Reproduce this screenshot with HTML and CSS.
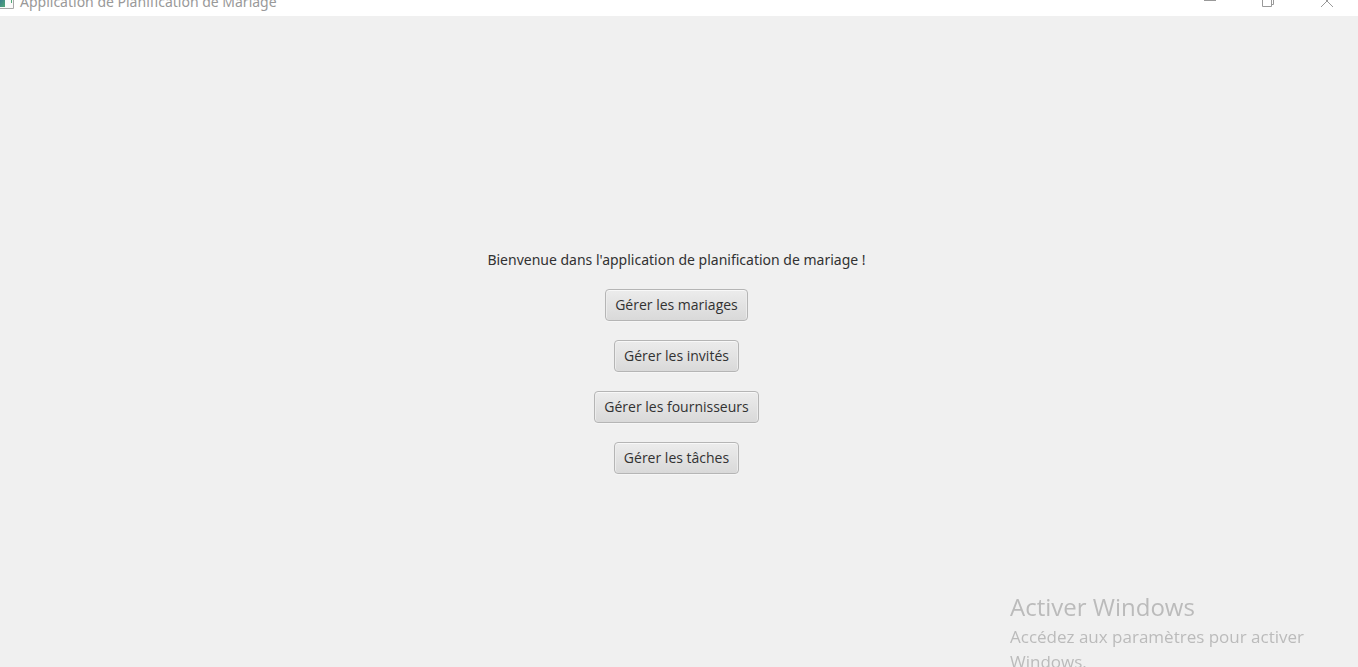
FILE: index.html
```html
<!DOCTYPE html>
<html lang="fr">
<head>
<meta charset="utf-8">
<title>Application de Planification de Mariage</title>
<link rel="stylesheet" href="styles.css">
</head>
<body>
<header class="titlebar">
  <div class="titlebar-name">
    <svg class="app-icon" width="14" height="16" viewBox="0 0 14 16" aria-hidden="true">
      <defs><linearGradient id="g" x1="0" y1="0" x2="1" y2="1"><stop offset="0" stop-color="#3a7f8c"/><stop offset="1" stop-color="#52a878"/></linearGradient></defs>
      <path d="M-3 1.500H13.500V15.500H-3" fill="#fafafa" stroke="#a8a8a8"/>
      <path d="M0 7H5V14H0Z" fill="url(#g)"/>
      <path d="M11 7H12V10H11Z" fill="#52a878"/>
    </svg>
    <span class="titlebar-text">Application de Planification de Mariage</span>
  </div>
  <div class="window-controls">
    <button class="window-button" aria-label="Réduire"><svg width="14" height="14" viewBox="0 0 14 14"><path d="M0 7.500H12" /></svg></button>
    <button class="window-button" aria-label="Restaurer"><svg width="14" height="14" viewBox="0 0 14 14"><path d="M0.500 3.500H9.500V13.500H0.500ZM2.500 3.500V1.500H11.500V11.500H9.500"/></svg></button>
    <button class="window-button" aria-label="Fermer"><svg width="14" height="14" viewBox="0 0 14 14"><path d="M1 2L13 14M13 2L1 14"/></svg></button>
  </div>
</header>
<main class="content">
  <p class="welcome">Bienvenue dans l'application de planification de mariage !</p>
  <button class="action">Gérer les mariages</button>
  <button class="action">Gérer les invités</button>
  <button class="action">Gérer les fournisseurs</button>
  <button class="action">Gérer les tâches</button>
</main>
<aside class="activation">
  <p class="activation-title">Activer Windows</p>
  <p class="activation-text">Accédez aux paramètres pour activer Windows.</p>
</aside>
</body>
</html>
```

FILE: styles.css
```css
* { box-sizing: border-box; }

body {
  margin: 0;
  height: 100vh;
  display: flex;
  flex-direction: column;
  overflow: hidden;
  background: #f0f0f0;
  color: #323232;
  font: 14px/20px "Open Sans", "Noto Sans", sans-serif;
}

p { margin: 0; }

.titlebar {
  flex: none;
  height: 16px;
  display: flex;
  align-items: flex-end;
  justify-content: space-between;
  overflow: hidden;
  background: #fff;
  color: #999;
}

.titlebar-name {
  display: flex;
  align-items: flex-end;
  gap: 6px;
  padding-bottom: 4px;
}

.titlebar-text,
.welcome {
  font-family: "Noto Sans", "Open Sans", sans-serif;
}

.app-icon { margin-bottom: 3px; }

.window-controls {
  display: flex;
  gap: 44px;
  padding-right: 24px;
  padding-bottom: 9px;
}

.window-button {
  display: flex;
  padding: 0;
  border: 0;
  background: none;
}

.window-button path {
  fill: none;
  stroke: #999;
}

.content {
  flex: 1;
  display: flex;
  flex-direction: column;
  align-items: center;
  justify-content: center;
  gap: 19px;
  padding: 40px 5px 0 0;
}

.action {
  height: 32px;
  padding: 0 9px;
  border: 1px solid #b5b5b5;
  border-radius: 4px;
  background: linear-gradient(#ececec, #d9d9d9);
  box-shadow: inset 0 1px #f8f8f8, inset 1px 0 #ececec, inset -1px 0 #ececec, 0 1px #f6f6f6;
  color: inherit;
  font: inherit;
}

.activation {
  position: fixed;
  right: 28px;
  bottom: -7px;
  width: 320px;
  color: #bbb;
}

.activation-title {
  font-size: 24px;
  line-height: 34px;
}

.activation-text {
  font-size: 17px;
  line-height: 25px;
}
```
